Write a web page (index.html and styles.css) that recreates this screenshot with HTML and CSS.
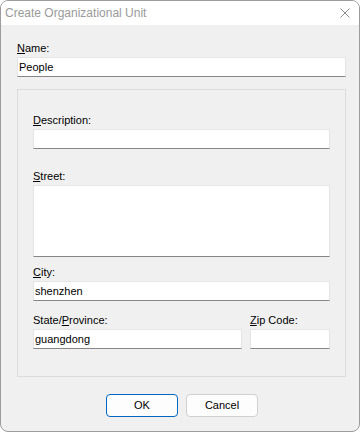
FILE: index.html
```html
<!DOCTYPE html>
<html>
<head>
<meta charset="utf-8">
<link rel="stylesheet" href="styles.css">
</head>
<body>
<div class="window">
  <div class="titlebar">
    <span class="title">Create Organizational Unit</span>
    <svg class="close" width="10" height="10" viewBox="0 0 10 10"><path d="M0.5 0.5L9.5 9.5M9.5 0.5L0.5 9.5" stroke="#8c8c8c" stroke-width="1" fill="none"/></svg>
  </div>
  <div class="content">
    <div class="label"><u>N</u>ame:</div>
    <div class="field">People</div>
    <div class="group">
      <div class="label"><u>D</u>escription:</div>
      <div class="field"></div>
      <div class="label street"><u>S</u>treet:</div>
      <div class="field area"></div>
      <div class="label city"><u>C</u>ity:</div>
      <div class="field">shenzhen</div>
      <div class="row">
        <div class="col wide">
          <div class="label">State/<u>P</u>rovince:</div>
          <div class="field">guangdong</div>
        </div>
        <div class="col zip">
          <div class="label"><u>Z</u>ip Code:</div>
          <div class="field"></div>
        </div>
      </div>
    </div>
    <div class="buttons">
      <div class="btn default">OK</div>
      <div class="btn">Cancel</div>
    </div>
  </div>
</div>
</body>
</html>
```
FILE: styles.css
```css
html, body {
  margin: 0;
  padding: 0;
  background: #ffffff;
}
body {
  font-family: "Liberation Sans", Arial, sans-serif;
  font-size: 11px;
  color: #000;
}
.window {
  width: 358px;
  height: 430px;
  border: 1px solid #9c9c9c;
  border-radius: 8px;
  background: #f0f0f0;
  overflow: hidden;
  display: flex;
  flex-direction: column;
}
.titlebar {
  height: 24px;
  background: #ffffff;
  display: flex;
  align-items: center;
  justify-content: space-between;
  padding: 0 9px 0 4px;
  flex: none;
}
.title {
  font-size: 12px;
  color: #9a9a9a;
}
.close {
  display: block;
}
.content {
  padding: 16px 13px 0 16px;
}
.label {
  height: 14px;
  line-height: 14px;
  margin-bottom: 2px;
  white-space: nowrap;
}
.field {
  background: #fff;
  border: 1px solid #e4e4e4;
  border-bottom-color: #868686;
  box-sizing: border-box;
  height: 20px;
  line-height: 18px;
  padding-left: 1px;
}
.group {
  margin-top: 12px;
  border: 1px solid #dcdcdc;
  padding: 23px 15px 27px 15px;
}
.street {
  margin-top: 20px;
}
.area {
  height: 72px;
}
.city {
  margin-top: 8px;
}
.row {
  display: flex;
  gap: 8px;
  margin-top: 12px;
}
.wide {
  flex: 1;
}
.zip {
  width: 80px;
}
.buttons {
  display: flex;
  justify-content: center;
  gap: 8px;
  margin-top: 17px;
  padding-left: 1px;
}
.btn {
  width: 72px;
  height: 23px;
  box-sizing: border-box;
  border: 1px solid #d0d0d0;
  border-radius: 4px;
  background: #fdfdfd;
  text-align: center;
  line-height: 21px;
  font-size: 11px;
}
.btn.default {
  border-color: #0067c0;
}
```
